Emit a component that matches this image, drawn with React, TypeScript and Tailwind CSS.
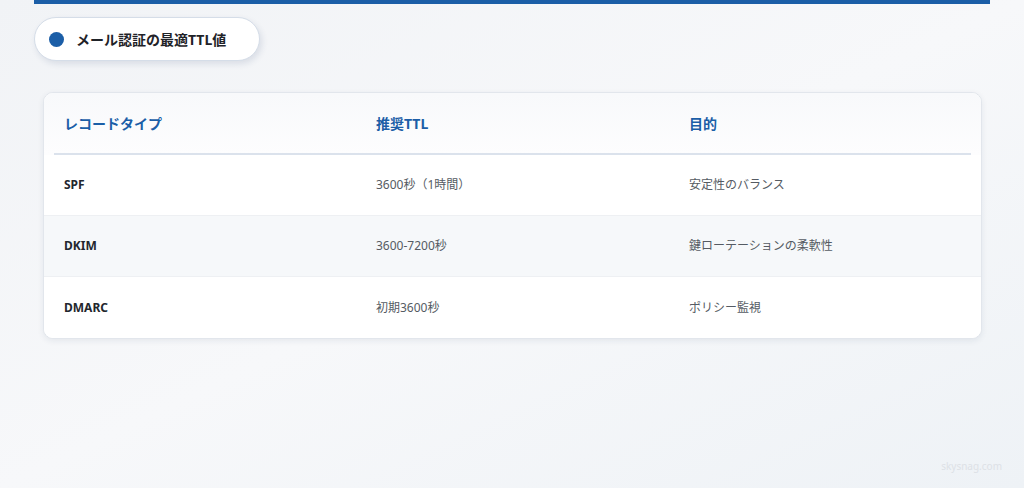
import React from "react";

const rows = [
  { type: "SPF", ttl: "3600秒（1時間）", purpose: "安定性のバランス" },
  { type: "DKIM", ttl: "3600-7200秒", purpose: "鍵ローテーションの柔軟性" },
  { type: "DMARC", ttl: "初期3600秒", purpose: "ポリシー監視" },
];

export default function App() {
  return (
    <div
      className="relative w-[1024px] h-[488px] overflow-hidden bg-gradient-to-br from-[#f1f3f6] via-[#f7f8fa] to-[#eef2f6]"
      style={{ fontFamily: '"Noto Sans", "Noto Sans CJK JP", sans-serif' }}
    >
      <div className="mx-[34px] w-[956px] h-[4px] bg-[#1b5ea7]" />
      <div className="ml-[34px] mt-[13px] w-[226px] h-[44px] rounded-full bg-white border border-[#d5dde8] shadow-[2px_3px_6px_rgba(30,60,110,0.12)] flex items-center pl-[14px]">
        <span className="w-[15px] h-[15px] rounded-full bg-[#1b5ea7]" />
        <span className="ml-[12px] text-[14px] font-bold text-[#1f2328]">メール認証の最適TTL値</span>
      </div>
      <div className="ml-[43px] mt-[31px] w-[939px] rounded-[10px] bg-white border border-[#e2e6ec] shadow-[0_2px_6px_rgba(30,50,90,0.08)] overflow-hidden">
        <div className="h-[62px] px-[10px] bg-gradient-to-b from-[#f8f9fb] to-[#fdfdfe]">
          <div className="h-full border-b-2 border-[#dbe2ec] grid grid-cols-[312px_313px_1fr] items-center pl-[10px] text-[14px] font-bold text-[#1b5ea7]">
            <span>レコードタイプ</span>
            <span>推奨TTL</span>
            <span>目的</span>
          </div>
        </div>
        {rows.map((r, i) => (
          <div
            key={r.type}
            className={`h-[61px] grid grid-cols-[312px_313px_1fr] items-center pl-[20px] text-[12px] ${i === 1 ? "bg-[#f6f8fa]" : "bg-white"} ${i < 2 ? "border-b border-[#eef0f3]" : ""}`}
          >
            <span className="font-bold text-[#23272e]">{r.type}</span>
            <span className="text-[#555b63]">{r.ttl}</span>
            <span className="text-[#555b63]">{r.purpose}</span>
          </div>
        ))}
      </div>
      <div className="absolute right-[22px] bottom-[14px] text-[10px] text-[#dde1e6]">skysnag.com</div>
    </div>
  );
}
